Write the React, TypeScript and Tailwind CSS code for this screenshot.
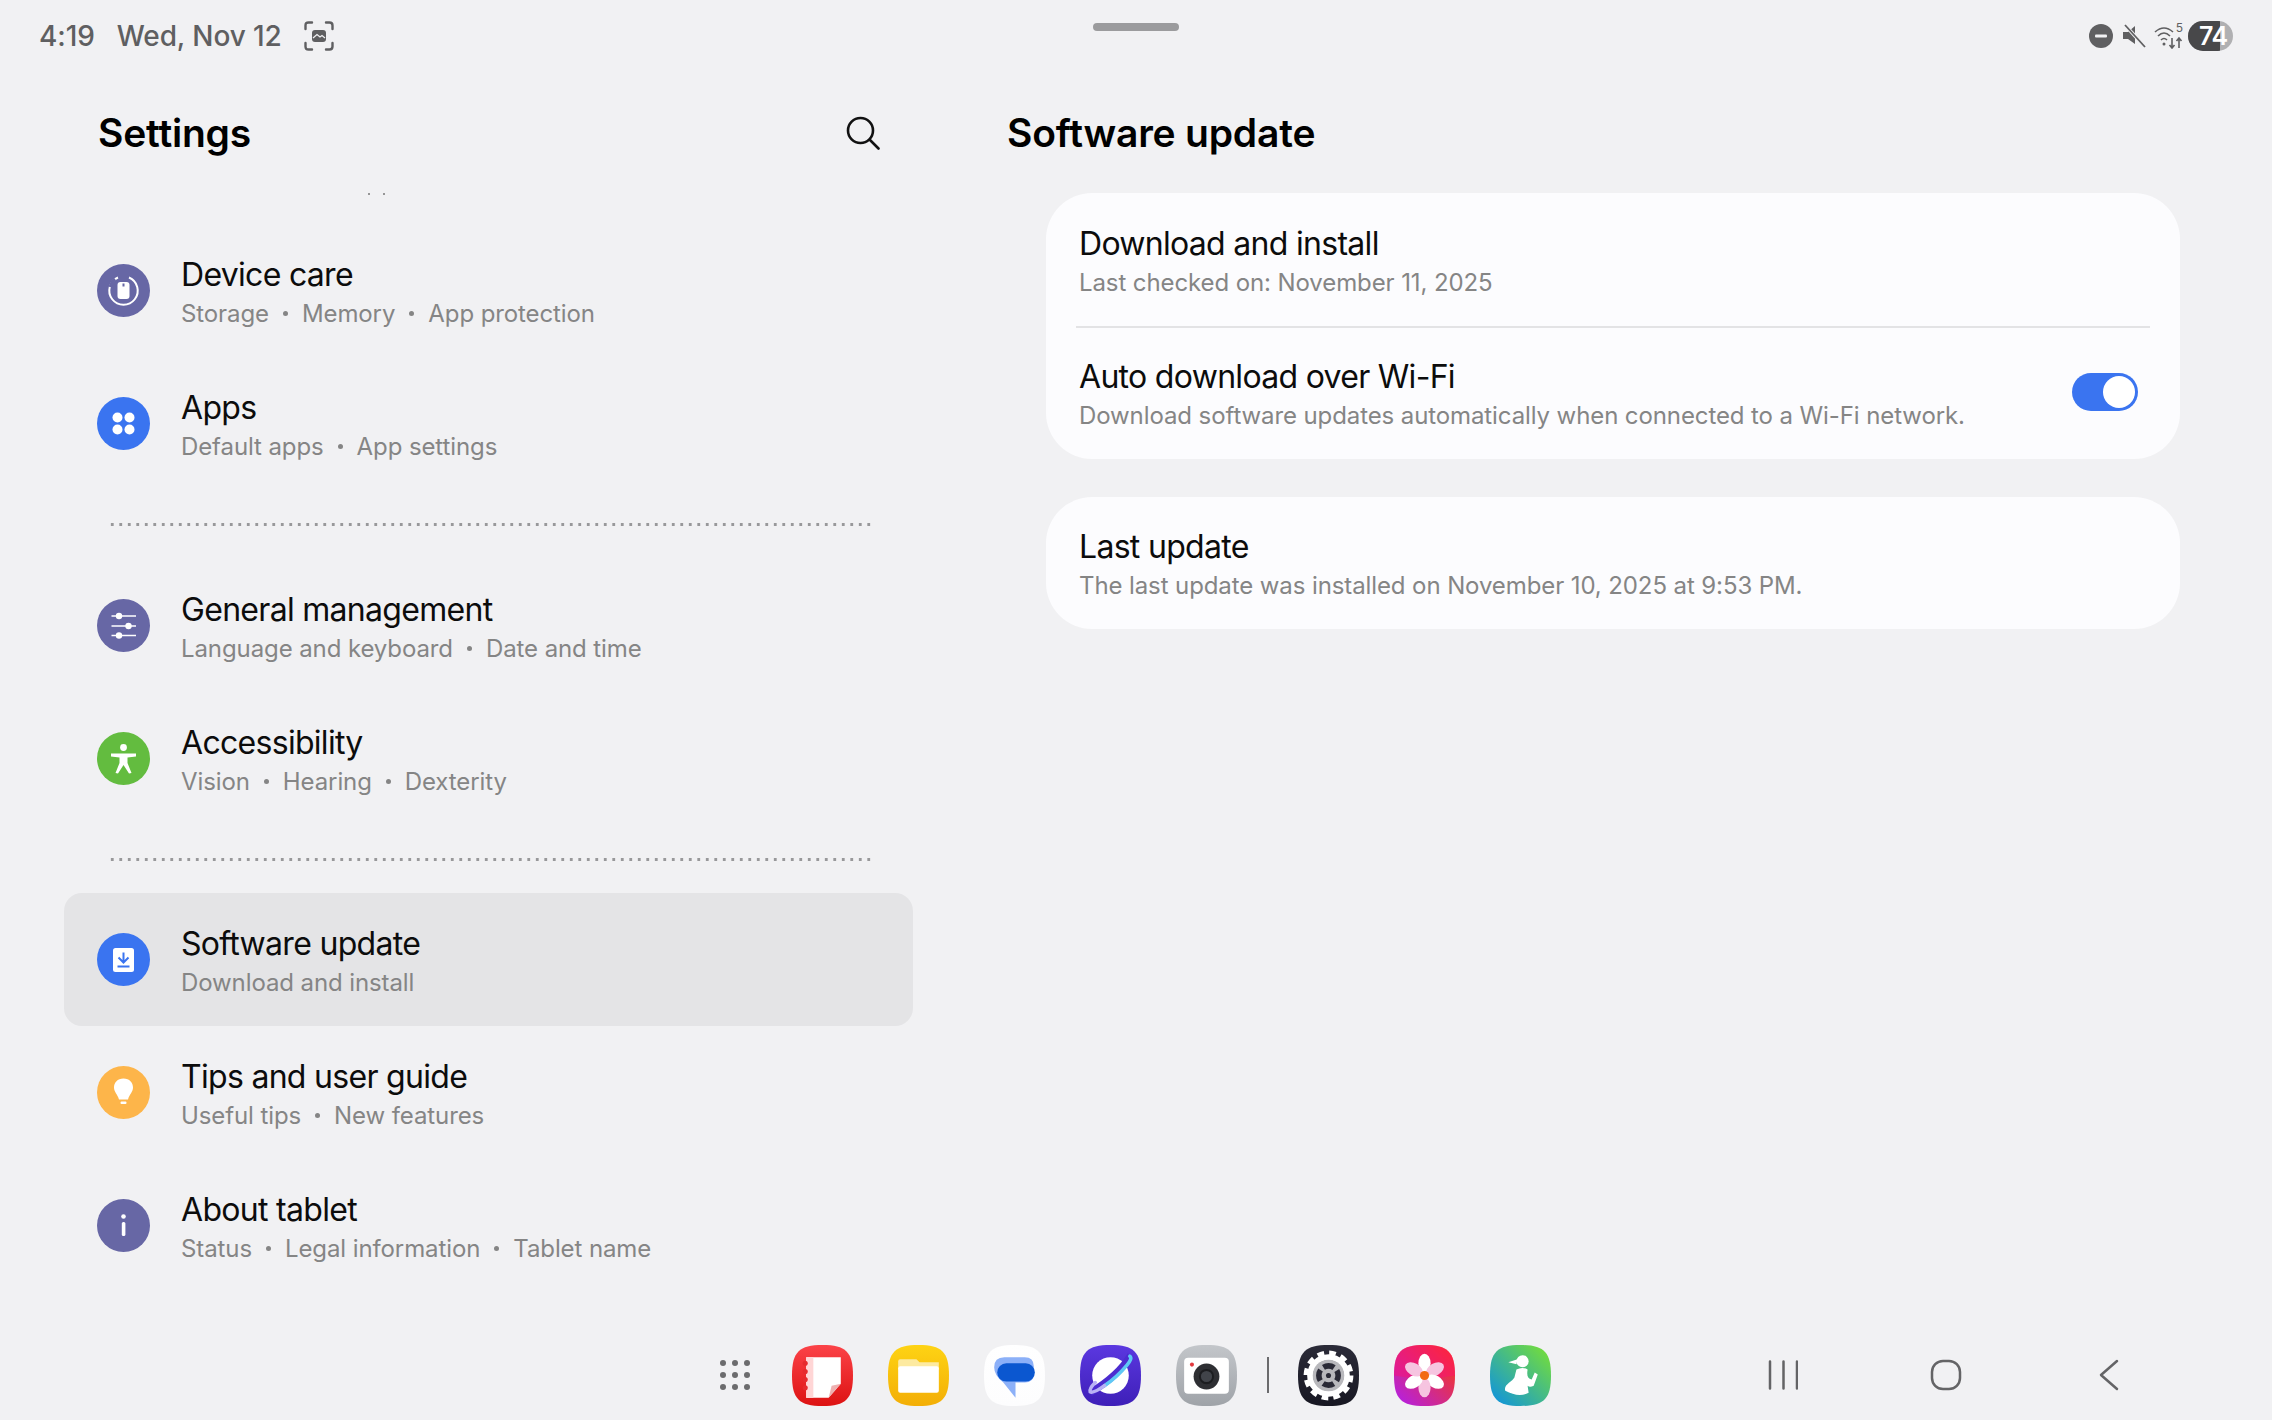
import type { ReactNode } from "react";

const squircle =
  "M30 0C53 0 60 7 60 30C60 53 53 60 30 60C7 60 0 53 0 30C0 7 7 0 30 0Z";

function DockIcon({
  id,
  from,
  to,
  diagonal,
  children,
}: {
  id: string;
  from: string;
  to: string;
  diagonal?: boolean;
  children: ReactNode;
}) {
  return (
    <svg viewBox="0 0 60 60" className="w-[61px] h-[61px] shrink-0">
      <defs>
        <linearGradient id={id} x1={diagonal ? "1" : "0"} y1="0" x2="0" y2="1">
          <stop offset="0" stopColor={from} />
          <stop offset="1" stopColor={to} />
        </linearGradient>
      </defs>
      <path d={squircle} fill={`url(#${id})`} />
      {children}
    </svg>
  );
}

function DeviceCareIcon() {
  return (
    <svg viewBox="0 0 53 53" className="w-[53px] h-[53px]">
      <circle cx="26.5" cy="26.5" r="26.5" fill="#6767a5" />
      <path d="M21 13.5A14.2 14.2 0 1 0 32 13.5" fill="none" stroke="#fff" strokeWidth="2" />
      <path d="M13.2 23A14.2 14.2 0 0 1 18 15" fill="none" stroke="#6767a5" strokeWidth="3" />
      <rect x="20.5" y="18" width="12" height="17" rx="3" fill="#fff" />
      <rect x="25.5" y="19.5" width="2" height="3" fill="#6767a5" />
    </svg>
  );
}

function AppsIcon() {
  return (
    <svg viewBox="0 0 53 53" className="w-[53px] h-[53px]">
      <circle cx="26.5" cy="26.5" r="26.5" fill="#3a74f0" />
      <circle cx="20.5" cy="20.5" r="5" fill="#fff" />
      <circle cx="32.5" cy="20.5" r="5" fill="#fff" />
      <circle cx="20.5" cy="32.5" r="5" fill="#fff" />
      <circle cx="32.5" cy="32.5" r="5" fill="#fff" />
    </svg>
  );
}

function GeneralIcon() {
  return (
    <svg viewBox="0 0 53 53" className="w-[53px] h-[53px]">
      <circle cx="26.5" cy="26.5" r="26.5" fill="#6767a5" />
      <g stroke="#fff" strokeWidth="1.6">
        <path d="M14.500 17H39M14.500 27H39M14.500 36.500H39" />
      </g>
      <circle cx="22" cy="17" r="3.200" fill="#fff" />
      <circle cx="31.500" cy="27" r="3.200" fill="#fff" />
      <circle cx="22" cy="36.500" r="3.200" fill="#fff" />
    </svg>
  );
}

function AccessibilityIcon() {
  return (
    <svg viewBox="0 0 53 53" className="w-[53px] h-[53px]">
      <circle cx="26.5" cy="26.5" r="26.5" fill="#63bc3f" />
      <circle cx="26.5" cy="15.500" r="3.400" fill="#fff" />
      <path d="M14 21.500H39V24.500L30.500 25.500V31L34.500 41L32 41.500L26.500 33L21 41.500L18.500 41L22.500 31V25.500L14 24.500Z" fill="#fff" />
    </svg>
  );
}

function SoftwareIcon() {
  return (
    <svg viewBox="0 0 53 53" className="w-[53px] h-[53px]">
      <circle cx="26.5" cy="26.5" r="26.5" fill="#3a74f0" />
      <rect x="16" y="15" width="21" height="24" rx="2.500" fill="#fff" />
      <path d="M26.500 19.500V29M21.500 24.500L26.500 29.500L31.500 24.500M20.500 33.500H32.500" fill="none" stroke="#3a74f0" strokeWidth="2" />
    </svg>
  );
}

function TipsIcon() {
  return (
    <svg viewBox="0 0 53 53" className="w-[53px] h-[53px]">
      <circle cx="26.5" cy="26.5" r="26.5" fill="#fdb54a" />
      <path d="M26.500 12.500C20.500 12.500 17 16.800 17 21.500C17 26 20.500 28 22 33.500H31C32.500 28 36 26 36 21.500C36 16.800 32.500 12.500 26.500 12.500Z" fill="#fff" />
      <rect x="23.500" y="35.500" width="6" height="2.500" rx="1" fill="#fff" />
    </svg>
  );
}

function AboutIcon() {
  return (
    <svg viewBox="0 0 53 53" className="w-[53px] h-[53px]">
      <circle cx="26.5" cy="26.5" r="26.5" fill="#6767a5" />
      <circle cx="26.500" cy="17.500" r="2.300" fill="#fff" />
      <rect x="24.800" y="23" width="3.600" height="14" rx="1.500" fill="#fff" />
    </svg>
  );
}

const groups = [
  [
    { icon: <DeviceCareIcon />, title: "Device care", sub: ["Storage", "Memory", "App protection"] },
    { icon: <AppsIcon />, title: "Apps", sub: ["Default apps", "App settings"] },
  ],
  [
    { icon: <GeneralIcon />, title: "General management", sub: ["Language and keyboard", "Date and time"] },
    { icon: <AccessibilityIcon />, title: "Accessibility", sub: ["Vision", "Hearing", "Dexterity"] },
  ],
  [
    { icon: <SoftwareIcon />, title: "Software update", sub: ["Download and install"], active: true },
    { icon: <TipsIcon />, title: "Tips and user guide", sub: ["Useful tips", "New features"] },
    { icon: <AboutIcon />, title: "About tablet", sub: ["Status", "Legal information", "Tablet name"] },
  ],
];

function SettingRow({ icon, title, sub, active }: { icon: ReactNode; title: string; sub: string[]; active?: boolean }) {
  return (
    <div className={`h-[133px] flex items-center pl-[33px] gap-[31px] rounded-[18px] ${active ? "bg-[#e4e4e6]" : ""}`}>
      {icon}
      <div className="pt-[2px]">
        <div className="text-[32px] leading-[44px] text-[#0c0c0c] tracking-[-0.7px]">{title}</div>
        <div className="text-[24px] leading-[34px] text-[#858585] tracking-[-0.1px] flex items-center">
          {sub.map((s, i) => (
            <span key={s} className="flex items-center">
              {i > 0 && <span className="mx-[14px] w-[5px] h-[5px] rounded-full bg-[#858585]" />}
              {s}
            </span>
          ))}
        </div>
      </div>
    </div>
  );
}

function Toggle() {
  return (
    <div className="mb-[3px] w-[66px] h-[38px] rounded-full bg-[#3a74f0] flex items-center justify-end pr-[3px]">
      <div className="w-[32px] h-[32px] rounded-full bg-white" />
    </div>
  );
}

export default function App() {
  return (
    <div className="relative w-[2272px] h-[1420px] overflow-hidden bg-[#f1f1f3] flex flex-col font-['Inter',sans-serif]">
      <div className="absolute left-[1093px] top-[23px] w-[86px] h-[8px] rounded-full bg-[#9b9b9d]" />

      {/* status bar */}
      <div className="h-[72px] shrink-0 flex items-center justify-between pl-[39px] pr-[39px] text-[#5f5f61]">
        <div className="flex items-center text-[28px] font-medium tracking-[-0.1px]">
          <span>4:19</span>
          <span className="ml-[22px]">Wed, Nov 12</span>
          <svg viewBox="0 0 30 30" className="ml-[22px] w-[30px] h-[30px]" fill="none" stroke="#5f5f61" strokeWidth="2.400">
            <path d="M1.500 8V4.500Q1.500 1.500 4.500 1.500H8M22 1.500H25.500Q28.500 1.500 28.500 4.500V8M28.500 22V25.500Q28.500 28.500 25.500 28.500H22M8 28.500H4.500Q1.500 28.500 1.500 25.500V22" strokeLinecap="round" />
            <rect x="8" y="9" width="14" height="12" rx="3" fill="#5f5f61" stroke="none" />
            <path d="M9 17L13 13.500L16 16L18 14.500L21 17" stroke="#f1f1f3" strokeWidth="1.200" />
          </svg>
        </div>
        <div className="flex items-center">
          <svg viewBox="0 0 24 24" className="w-[24px] h-[24px]">
            <circle cx="12" cy="12" r="12" fill="#5f5f61" />
            <rect x="6" y="10.500" width="12" height="3" rx="1" fill="#f1f1f3" />
          </svg>
          <svg viewBox="0 0 24 24" className="ml-[9px] w-[24px] h-[24px]">
            <path d="M1 8H6L13 2V20L6 15H1Z" fill="#5f5f61" />
            <path d="M3 1L23 23" stroke="#f1f1f3" strokeWidth="3.500" />
            <path d="M3 1L23 23" stroke="#5f5f61" strokeWidth="1.800" />
          </svg>
          <div className="ml-[8px] relative w-[30px] h-[26px]">
            <svg viewBox="0 0 30 26" className="w-[30px] h-[26px]" fill="none" stroke="#5f5f61" strokeWidth="1.600">
              <path d="M1 9Q10 1 19 9M4 13Q10 7 16 13M7 17Q10 14 13 17" />
              <circle cx="10" cy="21" r="1.500" fill="#5f5f61" stroke="none" />
              <path d="M18 15V25M15.500 22L18 25L20.500 22M25 25V15M22.500 18L25 15L27.500 18" />
            </svg>
            <span className="absolute right-[1px] top-[-2px] text-[12px] leading-[14px] text-[#5f5f61]">5</span>
          </div>
          <div className="ml-[4px] relative w-[45px] h-[30px] rounded-full overflow-hidden bg-[#b0b0b2]">
            <div className="h-full w-[32px] bg-[#48484a]" />
            <span className="absolute left-[11px] top-0 leading-[30px] text-[25px] font-semibold text-white tracking-[-0.5px]">74</span>
          </div>
        </div>
      </div>

      <div className="flex-1 flex min-h-0">
        {/* left panel */}
        <div className="w-[976px] shrink-0 pl-[64px] pr-[63px]">
          <div className="h-[122px] pl-[34px] pr-[33px] flex items-center justify-between">
            <h1 className="text-[39px] font-semibold text-black tracking-[-0.2px]">Settings</h1>
            <svg viewBox="0 0 34 34" className="w-[34px] h-[34px]" fill="none" stroke="#111" strokeWidth="2.600" strokeLinecap="round">
              <circle cx="14.500" cy="14.500" r="12.500" />
              <path d="M24 24L32.500 32.500" />
            </svg>
          </div>
          <div className="h-[31px] -mt-[1px] flex items-start gap-[13px] pl-[304px]">
            <span className="w-[2px] h-[2px] rounded-full bg-[#777]" />
            <span className="w-[2px] h-[2px] rounded-full bg-[#777]" />
          </div>
          <div className="flex flex-col">
            {groups.map((rows, g) => (
              <div key={g}>
                {g > 0 && (
                  <div className={`${g === 1 ? "h-[69px]" : "h-[68px]"} flex items-center pl-[44px] pr-[42px]`}>
                    <div className="w-full h-[3px] bg-[radial-gradient(circle,#98989a_1.4px,transparent_1.7px)] bg-[length:8.5px_3px]" />
                  </div>
                )}
                {rows.map((r) => (
                  <SettingRow key={r.title} {...r} />
                ))}
              </div>
            ))}
          </div>
        </div>

        {/* right panel */}
        <div className="flex-1 pl-[31px] pr-[92px]">
          <div className="h-[122px] flex items-center">
            <h2 className="text-[39px] font-semibold text-black tracking-[-0.2px]">Software update</h2>
          </div>
          <div className="mt-[-1px] ml-[39px] flex flex-col gap-[38px]">
            <div className="bg-[#fcfcfe] rounded-[46px]">
              <div className="h-[133px] flex flex-col justify-center px-[33px] pt-[2px]">
                <div className="text-[32px] leading-[44px] text-[#0c0c0c] tracking-[-0.7px]">Download and install</div>
                <div className="text-[24px] leading-[34px] text-[#858585] tracking-[-0.1px]">Last checked on: November 11, 2025</div>
              </div>
              <div className="mx-[30px] border-t-[2px] border-[#e3e3e5]" />
              <div className="h-[131px] flex items-center justify-between pl-[33px] pr-[42px]">
                <div>
                  <div className="text-[32px] leading-[44px] text-[#0c0c0c] tracking-[-0.7px]">Auto download over Wi-Fi</div>
                  <div className="text-[24px] leading-[34px] text-[#858585] tracking-[-0.1px]">Download software updates automatically when connected to a Wi-Fi network.</div>
                </div>
                <Toggle />
              </div>
            </div>
            <div className="bg-[#fcfcfe] rounded-[46px] h-[132px] flex flex-col justify-center px-[33px] pt-[1px]">
              <div className="text-[32px] leading-[44px] text-[#0c0c0c] tracking-[-0.7px]">Last update</div>
              <div className="text-[24px] leading-[34px] text-[#858585] tracking-[-0.1px]">The last update was installed on November 10, 2025 at 9:53 PM.</div>
            </div>
          </div>
        </div>
      </div>

      {/* dock */}
      <div className="h-[110px] shrink-0 flex items-center pt-[20px] pl-[718px]">
        <svg viewBox="0 0 34 34" className="w-[34px] h-[34px] mr-[40px]" fill="#6b6b6d">
          {[5, 17, 29].flatMap((y) =>
            [5, 17, 29].map((x) => <circle key={`${x}-${y}`} cx={x} cy={y} r="3" />),
          )}
        </svg>
        <div className="flex items-center gap-[35px]">
          <DockIcon id="notes" from="#fb4348" to="#dd1212">
            <path d="M14 12H48V38L36 52H14Z" fill="#fff" />
            <path d="M14 12H21V52H14Z" fill="#ffd6d6" />
            <path d="M36 52L39 40L48 38Z" fill="#eeb0b0" />
            <g fill="#e62b2e">
              <circle cx="13" cy="18" r="2.500" />
              <circle cx="13" cy="26" r="2.500" />
              <circle cx="13" cy="34" r="2.500" />
              <circle cx="13" cy="42" r="2.500" />
            </g>
          </DockIcon>
          <DockIcon id="files" from="#fed314" to="#f3ae06">
            <path d="M10 16Q10 14 12 14H28L31 17H50V24H10Z" fill="#fdeaa0" />
            <rect x="10" y="21" width="40" height="26" rx="2" fill="#fff" />
          </DockIcon>
          <DockIcon id="messages" from="#ffffff" to="#fdfdfe">
            <path d="M20 12H40Q49 12 49 21V28Q49 37 40 37H31V52L19 37Q10 30 10 22Q10 12 20 12Z" fill="#8cb0f8" />
            <rect x="13" y="18" width="37" height="18" rx="9" fill="#0b57d0" />
          </DockIcon>
          <DockIcon id="internet" from="#5b38e0" to="#3e1fb8">
            <circle cx="30" cy="30" r="18" fill="#fff" />
            <path d="M50 10Q38 30 10 47" fill="none" stroke="#4c2cd0" strokeWidth="7" />
            <path d="M49 11Q52 13 46 20Q36 32 24 40" fill="none" stroke="#5fc8f5" strokeWidth="3.500" strokeLinecap="round" />
            <path d="M24 40Q13 48 10 46Q9 43 15 37" fill="none" stroke="#b9b2f5" strokeWidth="3.500" strokeLinecap="round" />
          </DockIcon>
          <DockIcon id="camera" from="#c3c6ca" to="#9fa3a8">
            <rect x="8" y="12.500" width="44" height="35.500" rx="4" fill="#fff" />
            <circle cx="30" cy="31" r="12.700" fill="#2e2f33" />
            <circle cx="30" cy="31" r="6.500" fill="#41444a" stroke="#1c1d20" strokeWidth="2" />
            <circle cx="15.700" cy="19.300" r="2" fill="#e33a3f" />
          </DockIcon>
          <div className="w-[2px] h-[36px] bg-[#6b6b6d] -ml-[5px] -mr-[6px]" />
          <DockIcon id="settings" from="#2b2b38" to="#171722">
            <circle cx="30" cy="30" r="18" fill="none" stroke="#fff" strokeWidth="6" />
            <circle cx="30" cy="30" r="22" fill="none" stroke="#fff" strokeWidth="5" strokeDasharray="6.500 5.020" />
            <circle cx="30" cy="30" r="15.500" fill="#b8b8bc" />
            <circle cx="30" cy="30" r="9.500" fill="none" stroke="#2a2a36" strokeWidth="5.500" strokeDasharray="11 3.920" strokeDashoffset="5.500" />
            <circle cx="30" cy="30" r="2.500" fill="#2a2a36" />
          </DockIcon>
          <DockIcon id="gallery" from="#ff3c00" to="#b01ef0" diagonal>
            <path d="M30 0C53 0 60 7 60 30Q30 36 0 30C0 7 7 0 30 0Z" fill="#ff0a78" opacity="0.450" />
            <g>
              {[0, 60, 120, 180, 240, 300].map((a, i) => (
                <ellipse key={a} cx="30" cy="18" rx="6" ry="9.500" fill={i % 2 === 0 ? "#fff" : "#f6c4e0"} transform={`rotate(${a} 30 30)`} />
              ))}
            </g>
            <circle cx="30" cy="30" r="4.500" fill="#f26a14" />
          </DockIcon>
          <DockIcon id="health" from="#7be22f" to="#0a8fe6" diagonal>
            <circle cx="32" cy="16" r="6" fill="#fff" />
            <path d="M18 17L27 14L26 19Z" fill="#fff" />
            <path d="M26 24Q32 21 37 24C36 30 37 33 41 34L44 27L47 29L43 40Q39 42 37 40L38 47Q28 52 15 45C13 39 22 36 24 32Z" fill="#fff" />
          </DockIcon>
        </div>
        <div className="ml-[217px] flex items-center">
          <svg viewBox="0 0 30 30" className="w-[30px] h-[30px]" stroke="#646466" strokeWidth="2.500" strokeLinecap="round">
            <path d="M2 1.500V28.500M15.500 1.500V28.500M29 1.500V28.500" />
          </svg>
          <svg viewBox="0 0 32 32" className="ml-[132px] w-[32px] h-[32px]" fill="none" stroke="#646466" strokeWidth="2.500">
            <rect x="2" y="2" width="28" height="28" rx="11" />
          </svg>
          <svg viewBox="0 0 20 32" className="ml-[137px] w-[20px] h-[32px]" fill="none" stroke="#646466" strokeWidth="2.500" strokeLinecap="round" strokeLinejoin="round">
            <path d="M18 2L2 16L18 30" />
          </svg>
        </div>
      </div>
    </div>
  );
}
